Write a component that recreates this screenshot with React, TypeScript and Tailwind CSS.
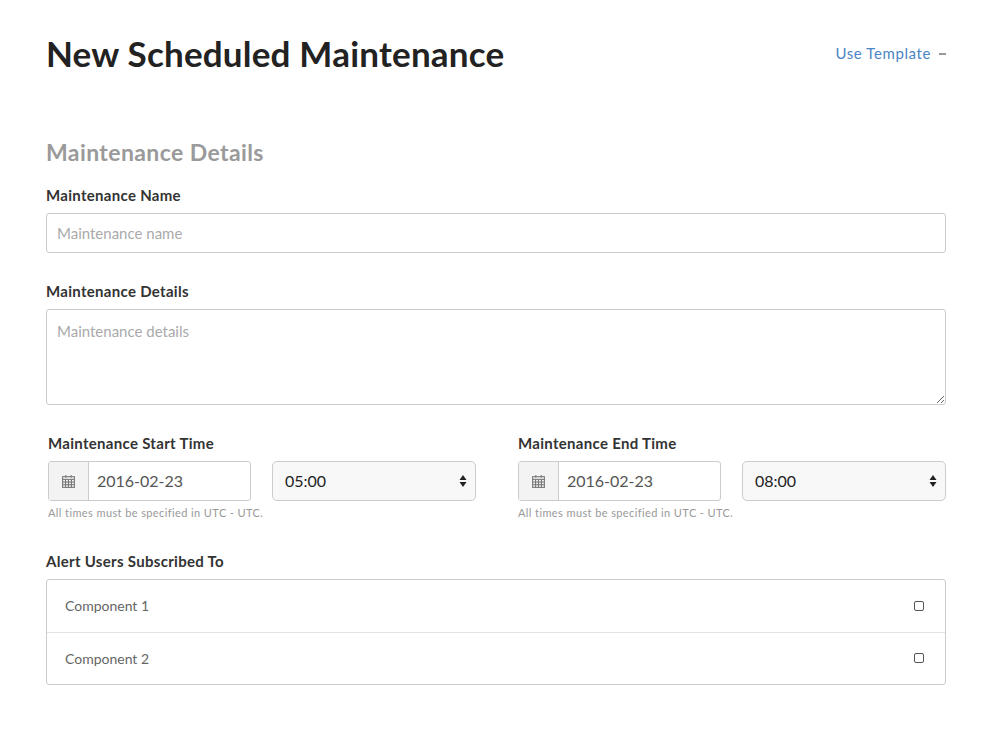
const font = { fontFamily: "Lato, 'Open Sans', 'Liberation Sans', sans-serif" };

function CalendarIcon() {
  return (
    <svg width="15" height="15" viewBox="0 0 14 14" fill="none" stroke="#777" strokeWidth="1">
      <rect x="1.5" y="2.5" width="11" height="10" />
      <line x1="1.5" y1="5" x2="12.5" y2="5" />
      <line x1="4.5" y1="1" x2="4.5" y2="3.5" />
      <line x1="9.5" y1="1" x2="9.5" y2="3.5" />
      <line x1="1.5" y1="7.5" x2="12.5" y2="7.5" />
      <line x1="1.5" y1="10" x2="12.5" y2="10" />
      <line x1="4.25" y1="5" x2="4.25" y2="12.5" />
      <line x1="7" y1="5" x2="7" y2="12.5" />
      <line x1="9.75" y1="5" x2="9.75" y2="12.5" />
    </svg>
  );
}

function SelectArrows() {
  return (
    <svg width="8" height="14" viewBox="0 0 8 14" fill="#222">
      <path d="M4 1 L7.5 6 L0.5 6 Z" />
      <path d="M4 13 L7.5 8 L0.5 8 Z" />
    </svg>
  );
}

function TimeField({ label, date, time }: { label: string; date: string; time: string }) {
  return (
    <div className="flex-1 pl-[2px]">
      <div className="mb-2 text-[15px] font-bold leading-5 tracking-[0.3px] text-[#333]">{label}</div>
      <div className="flex items-center">
        <div className="flex h-10 w-[203px] rounded-[3px] border border-[#ccc]">
          <div className="flex w-10 items-center justify-center border-r border-[#ccc] bg-[#f3f3f3]">
            <CalendarIcon />
          </div>
          <div className="flex flex-1 items-center pl-2 text-[16px] text-[#555]">{date}</div>
        </div>
        <div className="ml-auto flex h-10 w-[204px] items-center justify-between rounded-[5px] border border-[#ccc] bg-[#f8f8f8] pl-3 pr-2 text-[16px] text-[#222]">
          <span>{time}</span>
          <SelectArrows />
        </div>
      </div>
      <div className="mt-1 text-[11px] tracking-[0.4px] text-[#999]">All times must be specified in UTC - UTC.</div>
    </div>
  );
}

export default function App() {
  return (
    <div className="min-h-screen bg-white" style={font}>
      <div className="mx-auto w-[900px] pt-[30px]">
        <div className="flex items-start justify-between">
          <h1 className="text-[35px] font-bold leading-[46px] tracking-[0.2px] text-[#222]">New Scheduled Maintenance</h1>
          <button className="mt-[12px] flex items-center gap-2 text-[15px] tracking-[0.6px] text-[#4a84c4]">
            Use Template
            <span className="mt-[1px] inline-block h-[1.5px] w-[7px] bg-[#999]" />
          </button>
        </div>

        <h2 className="mt-[62px] text-[23px] font-bold leading-7 tracking-[0.4px] text-[#9a9a9a]">Maintenance Details</h2>

        <div className="mt-[19px] text-[15px] font-bold leading-5 tracking-[0.3px] text-[#333]">Maintenance Name</div>
        <input
          className="mt-2 h-10 w-full rounded-[3px] border border-[#ccc] px-[10px] text-[15px] outline-none placeholder:text-[#aaa]"
          placeholder="Maintenance name"
          style={font}
        />

        <div className="mt-[28px] text-[15px] font-bold leading-5 tracking-[0.3px] text-[#333]">Maintenance Details</div>
        <textarea
          className="mt-2 block h-[96px] w-full rounded-[3px] border border-[#ccc] px-[10px] py-[10px] text-[15px] outline-none placeholder:text-[#aaa]"
          placeholder="Maintenance details"
          style={font}
        />

        <div className="mt-[28px] flex gap-[40px]">
          <TimeField label="Maintenance Start Time" date="2016-02-23" time="05:00" />
          <TimeField label="Maintenance End Time" date="2016-02-23" time="08:00" />
        </div>

        <div className="mt-[29px] text-[15px] font-bold leading-5 tracking-[0.3px] text-[#333]">Alert Users Subscribed To</div>
        <div className="mt-2 rounded-[3px] border border-[#ccc]">
          {["Component 1", "Component 2"].map((c, i) => (
            <div
              key={c}
              className={`flex h-[52px] items-center justify-between pl-[18px] pr-[21px] text-[14px] text-[#666] ${i > 0 ? "border-t border-[#e3e3e3]" : ""}`}
            >
              <span>{c}</span>
              <span className="inline-block h-[10px] w-[10px] rounded-[2px] border border-[#555]" />
            </div>
          ))}
        </div>
      </div>
    </div>
  );
}
